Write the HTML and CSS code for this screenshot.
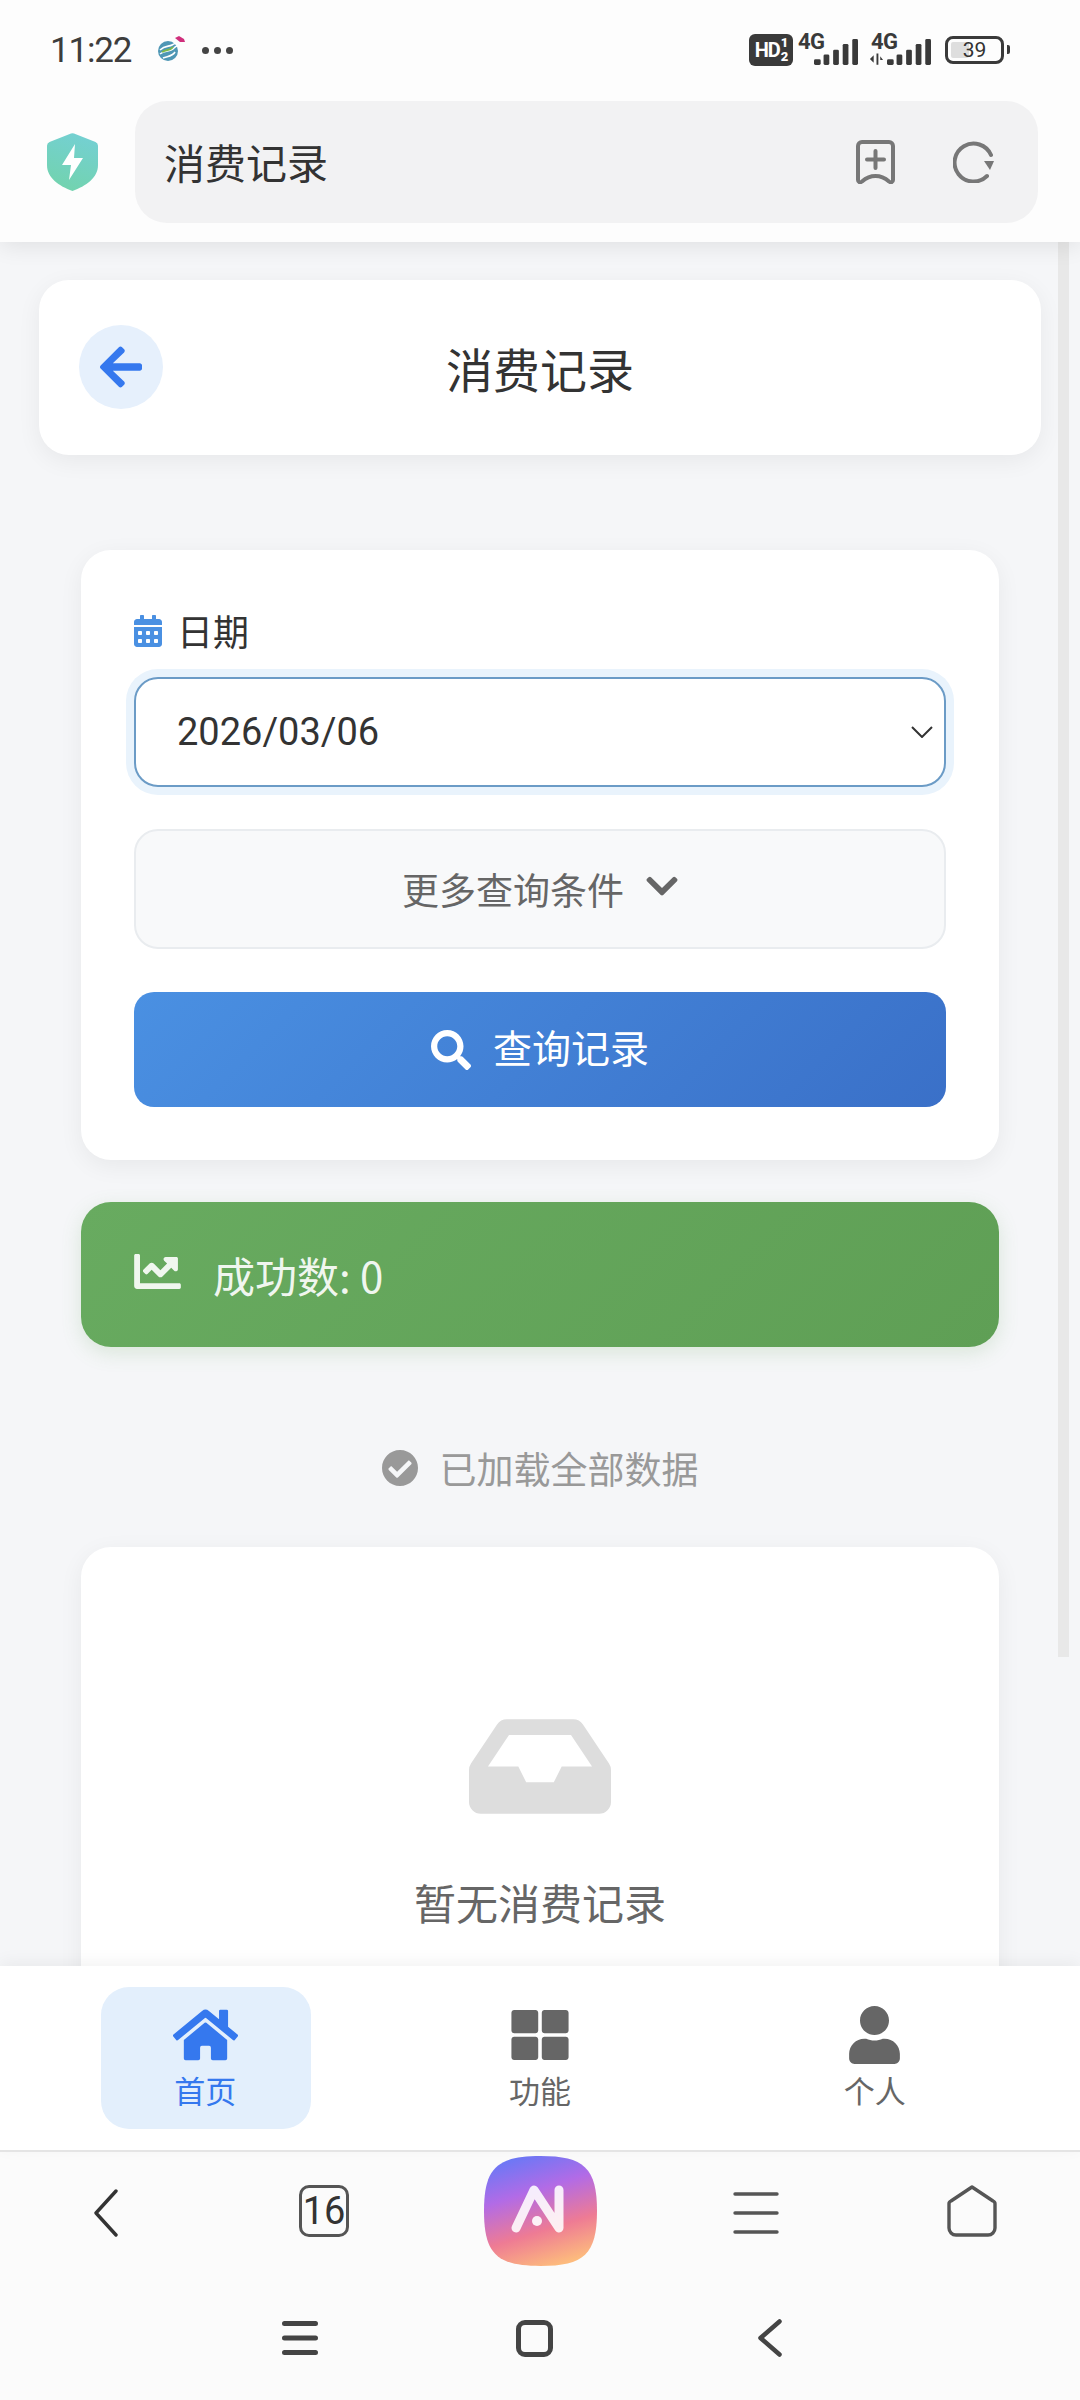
FILE: index.html
```html
<!DOCTYPE html>
<html lang="zh-CN">
<head>
<meta charset="utf-8">
<title>消费记录</title>
<link rel="stylesheet" href="styles.css">
</head>
<body>
<div class="phone">
  <header class="topbar">
    <div class="status">
      <div class="status-left">
        <span class="clock">11:22</span>
        <svg class="carrier" viewBox="0 0 28 28"><circle cx="11" cy="16" r="10" fill="#4f97b5"/><path d="M3 15c5-5 9-3 12-5s4-2 5-1M3 19c5-4 10-2 13-5s3-3 4-3M6 23c4-2 9-1 12-6" fill="none" stroke="#fff" stroke-width="1.6"/><path d="M5 17c5-3 8-1 11-5" fill="none" stroke="#7cb94a" stroke-width="2"/><path d="M18 3l4-2 5 3 1 3-5 0z" fill="#d02f7c"/></svg>
        <span class="dots"><i></i><i></i><i></i></span>
      </div>
      <div class="status-right">
        <span class="hd">HD<span class="hd-frac"><b>1</b><b>2</b></span></span>
        <span class="sim"><span class="sim-label">4G</span>
          <svg class="bars" viewBox="0 0 46 28"><rect x="0" y="21" width="7" height="6" rx="1.5"/><rect x="10" y="16" width="6" height="11" rx="1.5"/><rect x="20" y="11" width="6" height="16" rx="1.5"/><rect x="30" y="5" width="6" height="22" rx="1.5"/><rect x="40" y="0" width="6" height="27" rx="1.5"/></svg>
        </span>
        <span class="sim sim-two"><span class="sim-label">4G</span>
          <svg class="arrows" viewBox="0 0 16 12"><path d="M1 6l4-4v8zM8 0h2v12H8zM12 3l3 4h-3z"/></svg>
          <svg class="bars" viewBox="0 0 46 28"><rect x="0" y="21" width="7" height="6" rx="1.5"/><rect x="10" y="16" width="6" height="11" rx="1.5"/><rect x="20" y="11" width="6" height="16" rx="1.5"/><rect x="30" y="5" width="6" height="22" rx="1.5"/><rect x="40" y="0" width="6" height="27" rx="1.5"/></svg>
        </span>
        <span class="battery"><span class="battery-fill"></span><span class="battery-num">39</span></span>
        <span class="battery-nub"></span>
      </div>
    </div>
    <div class="appbar">
      <svg class="shield" viewBox="0 0 51 58">
        <defs><linearGradient id="shieldGrad" x1="0.7" y1="0" x2="0.4" y2="1"><stop offset="0" stop-color="#74d0d3"/><stop offset="1" stop-color="#72d3ae"/></linearGradient></defs>
        <path d="M24 .6a4 4 0 0 1 3 0L48.500 9a4 4 0 0 1 2.500 3.700V32c0 13-12 21-25.500 26C12 53 0 45 0 32V12.700A4 4 0 0 1 2.500 9z" fill="url(#shieldGrad)"/>
        <path d="M28 11L15 32h9l-2 15 14-22h-9z" fill="#fff"/>
      </svg>
      <div class="urlbar">
        <span class="url-title">消费记录</span>
        <div class="url-icons">
          <svg class="url-icon" viewBox="0 0 39 44"><path d="M6 2h27a4 4 0 0 1 4 4v34c0 2-2 3-4 1.500C29 38 25 36 19.500 36S10 38 6 41.500C4 43 2 42 2 40V6a4 4 0 0 1 4-4z" fill="none" stroke="#777" stroke-width="4" stroke-linejoin="round"/><path d="M19.500 11v17M11 19.500h17" stroke="#777" stroke-width="4" stroke-linecap="round"/></svg>
          <svg class="url-icon reload" viewBox="0 0 42 42"><path d="M38 14A19 19 0 1 0 34 35" fill="none" stroke="#777" stroke-width="4" stroke-linecap="round"/><path d="M31 20h10l-4 9z" fill="#777"/></svg>
        </div>
      </div>
    </div>
  </header>

  <main class="content">
    <div class="page-head">
      <button class="back-btn">
        <svg class="back-arrow" viewBox="0 0 448 512"><path d="M257.500 445.100l-22.200 22.200c-9.400 9.400-24.600 9.400-33.900 0L7 273c-9.400-9.400-9.400-24.600 0-33.900L201.400 44.700c9.400-9.400 24.600-9.400 33.900 0l22.200 22.200c9.500 9.500 9.300 25-.4 34.300L136.600 216H424c13.300 0 24 10.700 24 24v32c0 13.300-10.700 24-24 24H136.600l120.500 114.800c9.800 9.300 10 24.800.4 34.300z"/></svg>
      </button>
      <h1 class="page-title">消费记录</h1>
    </div>

    <div class="column">
      <section class="card filter">
        <div class="field-label">
          <svg class="calendar" viewBox="0 0 448 512"><path d="M0 464c0 26.500 21.500 48 48 48h352c26.500 0 48-21.500 48-48V192H0v272zm320-196c0-6.600 5.400-12 12-12h40c6.600 0 12 5.400 12 12v40c0 6.600-5.400 12-12 12h-40c-6.600 0-12-5.400-12-12v-40zm0 128c0-6.600 5.400-12 12-12h40c6.600 0 12 5.400 12 12v40c0 6.600-5.400 12-12 12h-40c-6.600 0-12-5.400-12-12v-40zM192 268c0-6.600 5.400-12 12-12h40c6.600 0 12 5.400 12 12v40c0 6.600-5.400 12-12 12h-40c-6.600 0-12-5.400-12-12v-40zm0 128c0-6.600 5.400-12 12-12h40c6.600 0 12 5.400 12 12v40c0 6.600-5.400 12-12 12h-40c-6.600 0-12-5.400-12-12v-40zM64 268c0-6.600 5.400-12 12-12h40c6.600 0 12 5.400 12 12v40c0 6.600-5.400 12-12 12H76c-6.600 0-12-5.400-12-12v-40zm0 128c0-6.600 5.400-12 12-12h40c6.600 0 12 5.400 12 12v40c0 6.600-5.400 12-12 12H76c-6.600 0-12-5.400-12-12v-40zM400 64h-48V16c0-8.800-7.200-16-16-16h-32c-8.800 0-16 7.200-16 16v48H160V16c0-8.800-7.200-16-16-16h-32c-8.800 0-16 7.200-16 16v48H48C21.500 64 0 85.500 0 112v48h448v-48c0-26.500-21.500-48-48-48z"/></svg>
          <span>日期</span>
        </div>
        <div class="select">
          <span>2026/03/06</span>
          <svg class="select-caret" viewBox="0 0 22 12"><path d="M1 1l10 10L21 1" fill="none" stroke="#333" stroke-width="2"/></svg>
        </div>
        <button class="more-btn">
          <span>更多查询条件</span>
          <svg class="more-caret" viewBox="0 100 448 310"><path d="M207.029 381.476L12.686 187.132c-9.373-9.373-9.373-24.569 0-33.941l22.667-22.667c9.357-9.357 24.522-9.375 33.901-.04L224 284.505l154.745-154.021c9.379-9.335 24.544-9.317 33.901.04l22.667 22.667c9.373 9.373 9.373 24.569 0 33.941L240.971 381.476c-9.373 9.372-24.569 9.372-33.942 0z"/></svg>
        </button>
        <button class="query-btn">
          <svg class="search-icon" viewBox="0 0 512 512"><path d="M505 442.700L405.300 343c-4.500-4.500-10.600-7-17-7H372c27.600-35.300 44-79.700 44-128C416 93.100 322.900 0 208 0S0 93.100 0 208s93.100 208 208 208c48.300 0 92.700-16.400 128-44v16.300c0 6.400 2.500 12.500 7 17l99.700 99.700c9.400 9.400 24.600 9.400 33.900 0l28.300-28.300c9.400-9.400 9.400-24.600.1-34zM208 336c-70.700 0-128-57.200-128-128 0-70.700 57.200-128 128-128 70.700 0 128 57.200 128 128 0 70.700-57.200 128-128 128z"/></svg>
          <span>查询记录</span>
        </button>
      </section>

      <section class="stat">
        <svg class="chart-icon" viewBox="0 64 512 384"><path d="M496 384H64V80c0-8.840-7.160-16-16-16H16C7.160 64 0 71.160 0 80v336c0 17.670 14.330 32 32 32h464c8.840 0 16-7.160 16-16v-32c0-8.840-7.160-16-16-16zM464 96H345.940c-21.380 0-32.090 25.850-16.970 40.970l32.400 32.400L288 242.750l-73.370-73.370c-12.500-12.500-32.760-12.500-45.250 0l-68.690 68.690c-6.250 6.250-6.250 16.380 0 22.630l22.620 22.620c6.250 6.250 16.380 6.250 22.630 0L192 237.250l73.370 73.370c12.500 12.500 32.760 12.500 45.250 0l96-96 32.400 32.400c15.120 15.120 40.970 4.410 40.970-16.970V112c.01-8.840-7.150-16-15.990-16z"/></svg>
        <span>成功数: 0</span>
      </section>

      <div class="loaded">
        <svg class="check-icon" viewBox="8 8 496 496"><path d="M504 256c0 136.967-111.033 248-248 248S8 392.967 8 256 119.033 8 256 8s248 111.033 248 248zM227.314 387.314l184-184c6.248-6.248 6.248-16.379 0-22.627l-22.627-22.627c-6.248-6.249-16.379-6.249-22.628 0L216 308.118l-70.059-70.059c-6.248-6.248-16.379-6.248-22.628 0l-22.627 22.627c-6.248 6.248-6.248 16.379 0 22.627l104 104c6.249 6.249 16.379 6.249 22.628.001z"/></svg>
        <span>已加载全部数据</span>
      </div>

      <section class="card empty">
        <svg class="inbox" viewBox="0 64 576 384"><path d="M567.938 243.908L462.250 85.374A48.003 48.003 0 0 0 422.311 64H153.689a48 48 0 0 0-39.938 21.374L8.062 243.908A47.994 47.994 0 0 0 0 270.533V400c0 26.510 21.490 48 48 48h480c26.510 0 48-21.490 48-48V270.533a47.994 47.994 0 0 0-8.062-26.625zM162.252 128h251.497l85.333 128H376l-32 64H232l-32-64H76.918l85.334-128z"/></svg>
        <p class="empty-text">暂无消费记录</p>
      </section>
    </div>
  </main>
  <div class="scroll-thumb"></div>

  <nav class="tabs">
    <a class="tab tab-active">
      <svg class="tab-icon tab-home" viewBox="0 32 576 448"><path d="M280.370 148.260L96 300.110V464a16 16 0 0 0 16 16l112.060-.29a16 16 0 0 0 15.920-16V368a16 16 0 0 1 16-16h64a16 16 0 0 1 16 16v95.640a16 16 0 0 0 16 16.050L464 480a16 16 0 0 0 16-16V300L295.670 148.260a12.190 12.190 0 0 0-15.300 0zM571.600 251.470L488 182.560V44.050a12 12 0 0 0-12-12h-56a12 12 0 0 0-12 12v72.610L318.470 43a48 48 0 0 0-61 0L4.340 251.470a12 12 0 0 0-1.600 16.900l25.500 31A12 12 0 0 0 45.150 301l235.220-193.740a12.190 12.190 0 0 1 15.300 0L530.900 301a12 12 0 0 0 16.900-1.600l25.500-31a12 12 0 0 0-1.700-16.930z"/></svg>
      <span>首页</span>
    </a>
    <a class="tab">
      <svg class="tab-icon tab-grid" viewBox="0 32 512 448"><path d="M296 32h192c13.255 0 24 10.745 24 24v160c0 13.255-10.745 24-24 24H296c-13.255 0-24-10.745-24-24V56c0-13.255 10.745-24 24-24zm-80 0H24C10.745 32 0 42.745 0 56v160c0 13.255 10.745 24 24 24h192c13.255 0 24-10.745 24-24V56c0-13.255-10.745-24-24-24zM0 296v160c0 13.255 10.745 24 24 24h192c13.255 0 24-10.745 24-24V296c0-13.255-10.745-24-24-24H24c-13.255 0-24 10.745-24 24zm296 184h192c13.255 0 24-10.745 24-24V296c0-13.255-10.745-24-24-24H296c-13.255 0-24 10.745-24 24v160c0 13.255 10.745 24 24 24z"/></svg>
      <span>功能</span>
    </a>
    <a class="tab">
      <svg class="tab-icon tab-user" viewBox="0 0 448 512"><path d="M224 256c70.700 0 128-57.300 128-128S294.700 0 224 0 96 57.300 96 128s57.300 128 128 128zm89.600 32h-16.700c-22.200 10.200-46.900 16-72.900 16s-50.600-5.800-72.900-16h-16.700C60.200 288 0 348.200 0 422.400V464c0 26.500 21.500 48 48 48h352c26.500 0 48-21.500 48-48v-41.600c0-74.200-60.200-134.400-134.400-134.400z"/></svg>
      <span>个人</span>
    </a>
  </nav>

  <footer class="browserbar">
    <div class="tools">
      <div class="tool">
        <svg class="tool-back" viewBox="0 0 26 48"><path d="M23 2L3 24l20 22" fill="none" stroke="#333" stroke-width="3.400" stroke-linecap="round" stroke-linejoin="round"/></svg>
      </div>
      <div class="tool"><span class="tabs-count">16</span></div>
      <div class="tool">
        <svg class="ai-logo" viewBox="0 0 113 110">
          <defs><linearGradient id="aiGrad" x1="0.3" y1="0" x2="0.62" y2="1"><stop offset="0" stop-color="#6a78f6"/><stop offset="0.33" stop-color="#b26be6"/><stop offset="0.68" stop-color="#ee7b94"/><stop offset="1" stop-color="#fdbb7d"/></linearGradient></defs>
          <path d="M56.500 0C100 0 113 12 113 55S100 110 56.500 110 0 98 0 55 13 0 56.500 0z" fill="url(#aiGrad)"/>
          <path d="M32 72L50 34 75 72V34" fill="none" stroke="#fff" stroke-opacity=".88" stroke-width="9" stroke-linecap="round" stroke-linejoin="round"/>
          <circle cx="53" cy="65" r="5" fill="#fff" fill-opacity=".9"/>
        </svg>
      </div>
      <div class="tool">
        <svg class="tool-menu" viewBox="0 0 46 42"><path d="M2 2h42M2 21h42M2 40h42" stroke="#555" stroke-width="3.400" stroke-linecap="round"/></svg>
      </div>
      <div class="tool">
        <svg class="tool-home" viewBox="0 0 50 52"><path d="M25 2L46 16a3 3 0 0 1 2 3v24a7 7 0 0 1-7 7H9a7 7 0 0 1-7-7V19a3 3 0 0 1 2-3z" fill="none" stroke="#555" stroke-width="3.400" stroke-linejoin="round"/></svg>
      </div>
    </div>
    <div class="sysnav">
      <div class="sys"><svg class="sys-menu" viewBox="0 0 36 34"><path d="M2.500 2.500h31M2.500 17h31M2.500 31.500h31" stroke="#444" stroke-width="5" stroke-linecap="round"/></svg></div>
      <div class="sys"><span class="sys-square"></span></div>
      <div class="sys"><svg class="sys-back" viewBox="0 0 24 38"><path d="M21.500 2.500L2.500 19l19 16.500" fill="none" stroke="#444" stroke-width="4.500" stroke-linecap="round" stroke-linejoin="round"/></svg></div>
    </div>
  </footer>
</div>
</body>
</html>
```

FILE: styles.css
```css
* { box-sizing: border-box; }
html, body { margin: 0; padding: 0; }
body { font-family: "Noto Sans CJK SC", "Noto Sans", sans-serif; color: #333; background: #f5f6f8; }
svg { display: block; flex: none; }
button { font: inherit; border: 0; padding: 0; margin: 0; }
h1, p { margin: 0; font-weight: 400; }

.phone { position: relative; width: 1080px; height: 2400px; display: flex; flex-direction: column; overflow: hidden; }

/* top chrome */
.topbar { position: relative; z-index: 2; height: 242px; flex: none; background: #fdfdfd; box-shadow: 0 4px 22px rgba(0,0,0,.09); }
.status { height: 101px; display: flex; justify-content: space-between; align-items: center; padding: 0 70px 0 50px; }
.status-left { display: flex; align-items: center; }
.clock { font-family: Roboto, sans-serif; font-size: 35px; line-height: 40px; color: #3d3d3d; width: 107px; letter-spacing: -1.200px; }
.carrier { width: 28px; height: 28px; margin-top: -4px; }
.dots { display: flex; gap: 5px; margin-left: 17px; }
.dots i { width: 7px; height: 7px; border-radius: 50%; background: #444; }
.status-right { display: flex; align-items: center; color: #3a3a3a; margin-top: -2px; }
.hd { width: 44px; height: 32px; border-radius: 6px; background: #3a3a3a; color: #fff; font: 700 20px/32px Roboto, sans-serif; display: flex; justify-content: center; letter-spacing: -1px; }
.hd-frac { display: flex; flex-direction: column; font-size: 13px; line-height: 14px; margin-left: 1px; padding-top: 2px; }
.hd-frac b { display: block; }
.sim { position: relative; width: 60px; height: 32px; display: block; margin-left: 5px; }
.sim-two { margin-left: 13px; }
.sim-label { position: absolute; left: 0; top: -3px; font: 700 22px/22px Roboto, sans-serif; letter-spacing: -.5px; }
.bars { position: absolute; right: 0; bottom: 0; width: 44px; height: 27px; fill: #3a3a3a; }
.arrows { position: absolute; left: -2px; bottom: 1px; width: 15px; height: 12px; fill: #3a3a3a; }
.battery { position: relative; width: 59px; height: 28px; margin-left: 14px; border: 3px solid #3a3a3a; border-radius: 8px; display: block; }
.battery-fill { position: absolute; left: 3px; top: 3px; bottom: 3px; width: 18px; background: #dedede; border-radius: 2px; }
.battery-num { position: absolute; inset: 0; text-align: center; font: 400 21px/22px Roboto, sans-serif; color: #333; }
.battery-nub { width: 3px; height: 9px; background: #3a3a3a; margin-left: 3px; border-radius: 0 2px 2px 0; }

.appbar { display: flex; align-items: center; padding: 0 42px 0 47px; height: 122px; }
.shield { width: 51px; height: 58px; }
.urlbar { flex: 1; height: 122px; margin-left: 37px; background: #f2f2f3; border-radius: 32px; display: flex; align-items: center; justify-content: space-between; padding: 0 43px 0 29px; }
.url-title { font-size: 41px; line-height: 50px; color: #333; margin-top: -3px; }
.url-icons { display: flex; align-items: center; gap: 58px; }
.url-icon { width: 39px; height: 44px; }
.url-icon.reload { width: 42px; height: 42px; }

/* page */
.content { flex: 1; min-height: 0; padding: 38px 39px 0; background: #f5f6f8; overflow: hidden; }
.page-head { position: relative; height: 175px; background: #fff; border-radius: 30px; box-shadow: 0 6px 24px rgba(0,0,0,.06); display: flex; align-items: center; justify-content: center; }
.back-btn { position: absolute; left: 40px; top: 45px; width: 84px; height: 84px; border-radius: 50%; background: #e6f0fc; display: flex; align-items: center; justify-content: center; }
.back-arrow { width: 42px; height: 48px; fill: #3578ee; }
.page-title { font-size: 47px; line-height: 60px; color: #333; }

.column { padding: 95px 42px 0; display: flex; flex-direction: column; }
.card { background: #fff; border-radius: 30px; box-shadow: 0 6px 24px rgba(0,0,0,.06); }

.filter { padding: 61px 53px 53px; }
.field-label { display: flex; align-items: center; height: 40px; font-size: 36px; line-height: 40px; color: #333; }
.field-label span { margin-top: -3px; }
.calendar { width: 28px; height: 32px; fill: #4a90e2; margin-right: 15px; }
.select { margin-top: 26px; height: 110px; border: 2px solid #6b9bc6; border-radius: 24px; box-shadow: 0 0 0 8px #e9f3fc; background: #fff; display: flex; align-items: center; justify-content: space-between; padding: 0 11px 0 41px; font-family: Roboto, "Noto Sans", sans-serif; font-size: 38px; color: #333; }
.select-caret { width: 22px; height: 12px; }
.more-btn { width: 100%; margin-top: 42px; height: 120px; background: #f8f9fa; border: 2px solid #e9ecef; border-radius: 24px; display: flex; align-items: center; justify-content: center; color: #666; font-size: 37px; line-height: 44px; }
.more-caret { width: 32px; height: 22px; fill: #666; margin-left: 22px; margin-top: -6px; }
.query-btn { width: 100%; margin-top: 43px; height: 115px; border-radius: 20px; background: linear-gradient(135deg, #4a90e2, #3a70c8); color: #fff; display: flex; align-items: center; justify-content: center; font-size: 39px; line-height: 50px; }
.query-btn span { margin-top: -8px; }
.search-icon { width: 40px; height: 40px; fill: #fff; margin-right: 22px; }

.stat { margin-top: 42px; height: 145px; border-radius: 30px; background: linear-gradient(135deg, #68ab60, #5f9f55); box-shadow: 0 6px 20px rgba(95,160,85,.18); display: flex; align-items: center; padding-left: 53px; color: rgba(255,255,255,.92); font-size: 42px; line-height: 50px; }
.chart-icon { width: 47px; height: 35px; fill: rgba(255,255,255,.9); margin-right: 32px; margin-top: -6px; }

.loaded { margin-top: 96px; height: 50px; display: flex; align-items: center; justify-content: center; color: #999; font-size: 37px; line-height: 50px; }
.check-icon { width: 36px; height: 36px; fill: #999; margin-right: 22px; }

.empty { margin-top: 54px; height: 560px; padding-top: 172px; display: flex; flex-direction: column; align-items: center; }
.inbox { width: 142px; height: 95px; fill: #ddd; }
.empty-text { margin-top: 60px; font-size: 42px; line-height: 56px; color: #666; }

.scroll-thumb { position: absolute; left: 1058px; top: 242px; width: 11px; height: 1415px; background: #e8e8e8; }

/* bottom tabs */
.tabs { position: relative; z-index: 2; flex: none; height: 186px; background: #fff; box-shadow: 0 -4px 16px rgba(0,0,0,.05); display: flex; padding: 21px 38px 0; border-bottom: 2px solid #e4e4e4; }
.tab { flex: 1; display: flex; flex-direction: column; align-items: center; color: #666; font-size: 31px; line-height: 36px; position: relative; height: 142px; }
.tab span { position: absolute; top: 85px; }
.tab-active { color: #3578ee; }
.tab-active::before { content: ""; position: absolute; top: 0; bottom: 0; left: 63px; width: 210px; background: #e3effc; border-radius: 28px; }
.tab-icon { position: relative; fill: #666; }
.tab-home { width: 65px; height: 52px; margin-top: 22px; fill: #3578ee; }
.tab-grid { width: 58px; height: 50px; margin-top: 23px; }
.tab-user { width: 51px; height: 58px; margin-top: 19px; }

/* browser chrome */
.browserbar { flex: none; height: 248px; background: #fbfbfb; display: flex; flex-direction: column; }
.tools { flex: none; height: 114px; display: flex; padding-top: 4px; }
.tool { width: 216px; display: flex; align-items: center; justify-content: center; }
.tool-back { width: 26px; height: 48px; margin: 4px 0 0 -4px; }
.tabs-count { width: 50px; height: 52px; border: 3.500px solid #555; border-radius: 10px; display: flex; align-items: center; justify-content: center; font: 400 38px/1 Roboto, sans-serif; color: #333; }
.ai-logo { width: 113px; height: 110px; }
.tool-menu { width: 46px; height: 42px; margin-top: 4px; }
.tool-home { width: 50px; height: 52px; }
.sysnav { flex: none; height: 84px; display: flex; padding: 0 0 0 182px; margin-top: 30px; }
.sys { width: 235px; height: 84px; display: flex; align-items: center; justify-content: center; }
.sys-menu { width: 36px; height: 34px; }
.sys-square { width: 37px; height: 37px; border: 5px solid #444; border-radius: 9px; display: block; }
.sys-back { width: 24px; height: 38px; }
```
